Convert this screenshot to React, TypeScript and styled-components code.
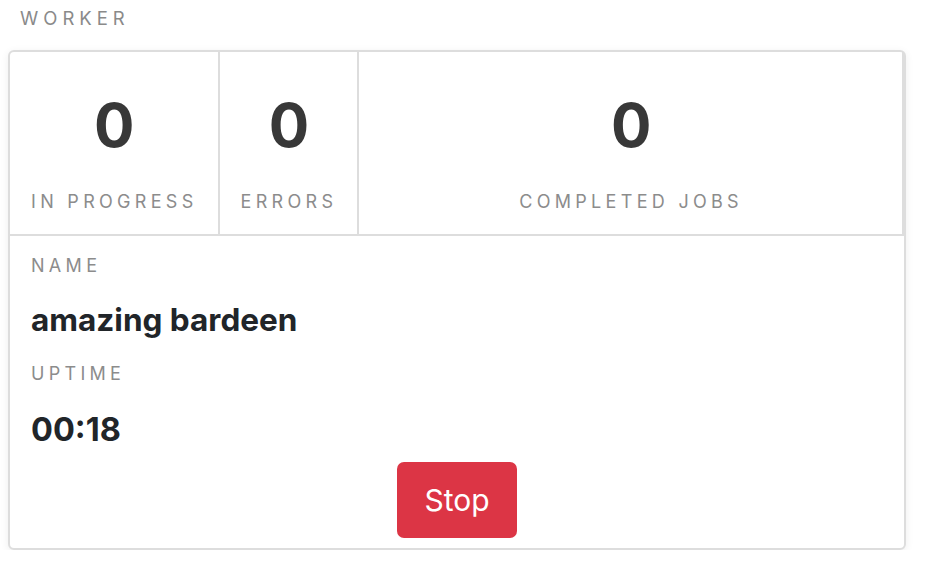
import React from "react";
import styled, { createGlobalStyle } from "styled-components";

const GlobalStyle = createGlobalStyle`
  html, body {
    margin: 0;
    padding: 0;
    background: #ffffff;
  }
  body {
    font-family: Inter, "Noto Sans", "Liberation Sans", sans-serif;
    color: #212529;
  }
`;

const Page = styled.div`
  padding: 5px 8px 0 8px;
`;

const Heading = styled.div`
  padding-left: 12px;
  font-size: 18.5px;
  line-height: 27px;
  letter-spacing: 5px;
  color: #8a8a8a;
  text-transform: uppercase;
  margin-bottom: 18px;
`;

const Card = styled.section`
  width: 898px;
  box-sizing: border-box;
  border: 2px solid #dddddd;
  border-radius: 6px;
  box-shadow: 0 2px 8px rgba(0, 0, 0, 0.07);
  background: #fff;
  display: flex;
  flex-direction: column;
`;

const StatsRow = styled.div`
  display: flex;
  border-bottom: 2px solid #dddddd;
`;

const StatCell = styled.div<{ $grow?: boolean }>`
  flex: ${(p) => (p.$grow ? "1 1 auto" : "0 0 auto")};
  display: flex;
  flex-direction: column;
  align-items: center;
  padding: 37px 20px 19px 21px;
  border-right: 2px solid #dddddd;
`;

const StatNumber = styled.div`
  font-size: 60px;
  line-height: 72px;
  font-weight: 700;
  color: #383838;
`;

const Label = styled.div`
  font-size: 18px;
  line-height: 27px;
  letter-spacing: 4.3px;
  color: #8c8c8c;
  text-transform: uppercase;
  white-space: nowrap;
`;

const StatLabel = styled(Label)`
  margin-top: 27px;
`;

const Details = styled.div`
  display: flex;
  flex-direction: column;
  padding: 16px 21px 10px 21px;
`;

const Value = styled.div<{ $size?: number }>`
  font-size: ${(p) => p.$size ?? 31.5}px;
  line-height: 38px;
  font-weight: 700;
  color: #212529;
  margin: 22px 0 21px 0;
`;

const UptimeValue = styled(Value)`
  margin: 24px 0 13px 0;
`;

const Actions = styled.div`
  display: flex;
  justify-content: center;
`;

const StopButton = styled.button`
  font-family: Inter, "Noto Sans", "Liberation Sans", sans-serif;
  font-size: 30px;
  line-height: 46px;
  padding: 15px 27px;
  border: none;
  border-radius: 7px;
  background: #dc3545;
  color: #ffffff;
  cursor: pointer;
`;

export default function App() {
  return (
    <>
      <GlobalStyle />
      <Page>
        <Heading>Worker</Heading>
        <Card>
          <StatsRow>
            <StatCell>
              <StatNumber>0</StatNumber>
              <StatLabel>In progress</StatLabel>
            </StatCell>
            <StatCell>
              <StatNumber>0</StatNumber>
              <StatLabel>Errors</StatLabel>
            </StatCell>
            <StatCell $grow>
              <StatNumber>0</StatNumber>
              <StatLabel>Completed jobs</StatLabel>
            </StatCell>
          </StatsRow>
          <Details>
            <Label>Name</Label>
            <Value>amazing bardeen</Value>
            <Label>Uptime</Label>
            <UptimeValue $size={32.5}>00:18</UptimeValue>
            <Actions>
              <StopButton>Stop</StopButton>
            </Actions>
          </Details>
        </Card>
      </Page>
    </>
  );
}
